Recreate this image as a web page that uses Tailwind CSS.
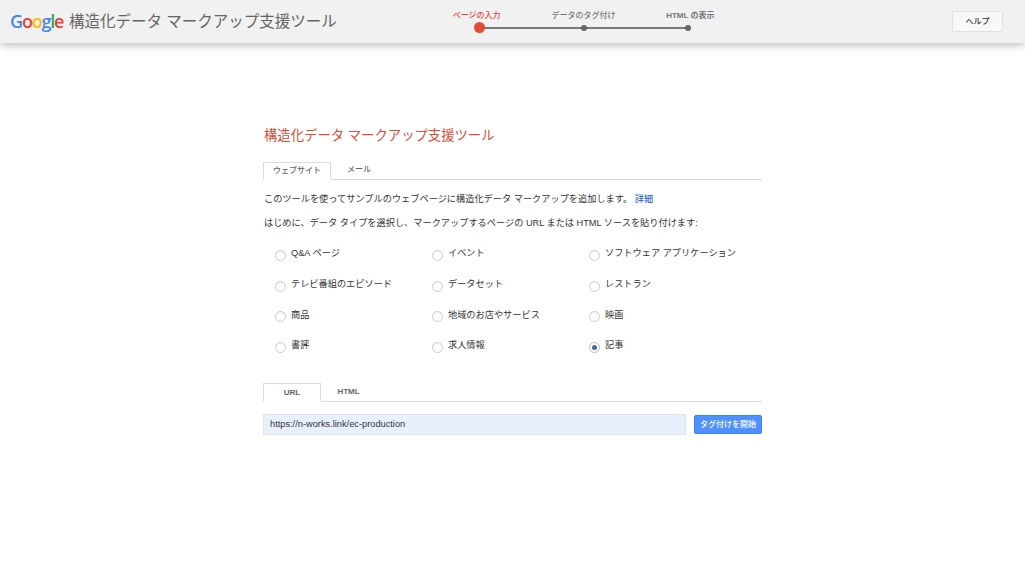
<!DOCTYPE html>
<html lang="ja">
<head>
  <meta charset="UTF-8" />
  <title>構造化データ マークアップ支援ツール</title>
  <script src="https://cdn.jsdelivr.net/npm/@tailwindcss/browser@4"></script>
</head>
<body class="bg-white h-[561px] overflow-hidden font-['Liberation_Sans','Noto_Sans_CJK_JP',sans-serif] text-[#333]">
  <!-- header -->
  <header class="h-[43px] bg-[#f1f1f1] shadow-[0_2px_8px_rgba(0,0,0,0.28)] flex items-center pl-[10px] pr-[22px]">
    <div class="w-[59px] text-[18px] leading-none tracking-[-1.2px] font-semibold font-['Open_Sans',sans-serif] -mt-px">
      <span class="text-[#4285f4]">G</span><span class="text-[#ea4335]">o</span><span class="text-[#fbbc05]">o</span><span class="text-[#4285f4]">g</span><span class="text-[#34a853]">l</span><span class="text-[#ea4335]">e</span>
    </div>
    <div class="w-[358px] text-[15.5px] text-[#666]">構造化データ マークアップ支援ツール</div>
    <!-- steps -->
    <div class="relative grid grid-cols-3 w-[313px] h-[43px] text-[8px] font-medium text-center">
      <div class="absolute left-[52px] w-[209px] top-[26.5px] h-[2px] bg-[#777]"></div>
      <div class="flex flex-col items-center pt-[10px] text-[#dd4b39]">
        <span class="h-[11px] leading-[11px] -ml-[5px]">ページの入力</span>
        <span class="relative mt-px w-[11px] h-[11px] rounded-full bg-[#e34a33]"></span>
      </div>
      <div class="flex flex-col items-center pt-[10px] text-[#777]">
        <span class="h-[11px] leading-[11px]">データのタグ付け</span>
        <span class="relative mt-[4px] ml-[1px] w-[6px] h-[6px] rounded-full bg-[#666]"></span>
      </div>
      <div class="flex flex-col items-center pt-[10px] text-[#777]">
        <span class="h-[11px] leading-[11px] ml-[5px] font-bold">HTML の表示</span>
        <span class="relative mt-[4px] w-[6px] h-[6px] rounded-full bg-[#666]"></span>
      </div>
    </div>
    <button class="ml-auto w-[51px] h-[21px] bg-[#f8f8f8] border border-[#e2e2e2] rounded-[2px] text-[8px] font-medium text-[#333]">ヘルプ</button>
  </header>

  <main class="w-[498px] ml-[264px]">
    <h1 class="mt-[83px] h-[20px] leading-[20px] text-[13.35px] text-[#dd4b39]">構造化データ マークアップ支援ツール</h1>

    <!-- tabs -->
    <div class="mt-[16px] -ml-px flex h-[18px] border-b border-[#dcdcdc] text-[8px] text-[#666] font-medium">
      <div class="w-[68px] h-[18px] border border-[#dcdcdc] border-b-white bg-white text-center leading-[16px]">ウェブサイト</div>
      <div class="w-[56px] text-center leading-[16px]">メール</div>
    </div>

    <p class="mt-[12px] text-[9.2px] leading-[14px] text-[#333]">このツールを使ってサンプルのウェブページに構造化データ マークアップを追加します。 <a class="text-[#1155cc]">詳細</a></p>
    <p class="mt-[10px] text-[9.2px] leading-[14px] text-[#333]">はじめに、データ タイプを選択し、マークアップするページの URL または HTML ソースを貼り付けます:</p>

    <!-- data types -->
    <div class="mt-[9px] ml-[11px] grid grid-cols-[157px_157px_1fr] auto-rows-[30.6px] text-[9.2px] text-[#333]">
      <label class="flex items-center gap-[5px]"><span class="mt-[3px] w-[11px] h-[11px] rounded-full border border-[#ccc] shadow-[inset_0_1px_1px_rgba(0,0,0,0.06)]"></span><span>Q&amp;A ページ</span></label>
      <label class="flex items-center gap-[5px]"><span class="mt-[3px] w-[11px] h-[11px] rounded-full border border-[#ccc] shadow-[inset_0_1px_1px_rgba(0,0,0,0.06)]"></span><span>イベント</span></label>
      <label class="flex items-center gap-[5px]"><span class="mt-[3px] w-[11px] h-[11px] rounded-full border border-[#ccc] shadow-[inset_0_1px_1px_rgba(0,0,0,0.06)]"></span><span>ソフトウェア アプリケーション</span></label>
      <label class="flex items-center gap-[5px]"><span class="mt-[3px] w-[11px] h-[11px] rounded-full border border-[#ccc] shadow-[inset_0_1px_1px_rgba(0,0,0,0.06)]"></span><span>テレビ番組のエピソード</span></label>
      <label class="flex items-center gap-[5px]"><span class="mt-[3px] w-[11px] h-[11px] rounded-full border border-[#ccc] shadow-[inset_0_1px_1px_rgba(0,0,0,0.06)]"></span><span>データセット</span></label>
      <label class="flex items-center gap-[5px]"><span class="mt-[3px] w-[11px] h-[11px] rounded-full border border-[#ccc] shadow-[inset_0_1px_1px_rgba(0,0,0,0.06)]"></span><span>レストラン</span></label>
      <label class="flex items-center gap-[5px]"><span class="mt-[3px] w-[11px] h-[11px] rounded-full border border-[#ccc] shadow-[inset_0_1px_1px_rgba(0,0,0,0.06)]"></span><span>商品</span></label>
      <label class="flex items-center gap-[5px]"><span class="mt-[3px] w-[11px] h-[11px] rounded-full border border-[#ccc] shadow-[inset_0_1px_1px_rgba(0,0,0,0.06)]"></span><span>地域のお店やサービス</span></label>
      <label class="flex items-center gap-[5px]"><span class="mt-[3px] w-[11px] h-[11px] rounded-full border border-[#ccc] shadow-[inset_0_1px_1px_rgba(0,0,0,0.06)]"></span><span>映画</span></label>
      <label class="flex items-center gap-[5px]"><span class="mt-[3px] w-[11px] h-[11px] rounded-full border border-[#ccc] shadow-[inset_0_1px_1px_rgba(0,0,0,0.06)]"></span><span>書評</span></label>
      <label class="flex items-center gap-[5px]"><span class="mt-[3px] w-[11px] h-[11px] rounded-full border border-[#ccc] shadow-[inset_0_1px_1px_rgba(0,0,0,0.06)]"></span><span>求人情報</span></label>
      <label class="flex items-center gap-[5px]"><span class="mt-[3px] w-[11px] h-[11px] rounded-full border border-[#a9bcd6] flex items-center justify-center"><span class="w-[5px] h-[5px] rounded-full bg-[#4a6a94]"></span></span><span>記事</span></label>
    </div>

    <!-- source tabs -->
    <div class="mt-[22px] -ml-px flex h-[19px] border-b border-[#dcdcdc] text-[8px] text-[#666] font-bold">
      <div class="w-[58px] h-[19px] border border-[#dcdcdc] border-b-white bg-white text-center leading-[17px]">URL</div>
      <div class="w-[55px] text-center leading-[17px]">HTML</div>
    </div>

    <div class="mt-[12px] -ml-px flex justify-between items-start">
      <div class="w-[423px] h-[21px] bg-[#e8f0fe] border border-[#dfe3ea] pl-[6px] text-[9.25px] leading-[19px] text-[#333]">https://n-works.link/ec-production</div>
      <button class="mt-px w-[68px] h-[19px] bg-[#4d90fe] rounded-[2px] border border-[#3f84f0] text-white text-[8px] font-medium">タグ付けを開始</button>
    </div>
  </main>
</body>
</html>
